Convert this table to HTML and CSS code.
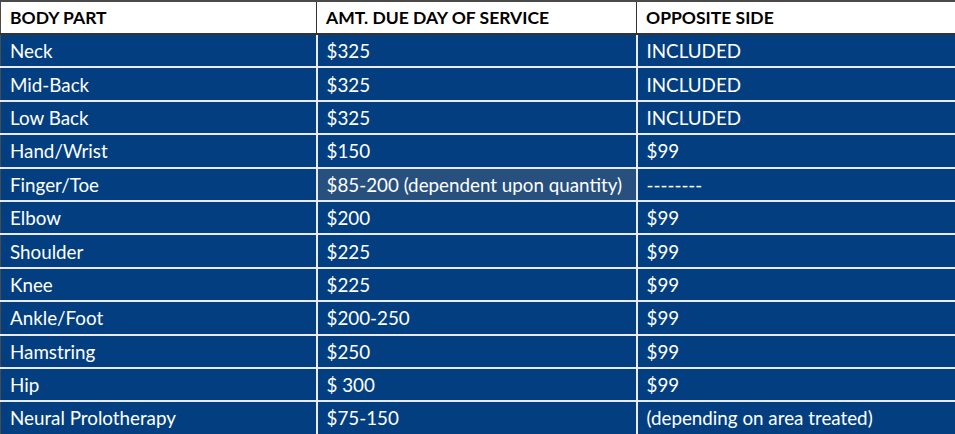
FILE: index.html
```html
<!DOCTYPE html>
<html>
<head>
<meta charset="utf-8">
<link rel="stylesheet" href="styles.css">
</head>
<body>
<table class="price-table">
  <colgroup>
    <col class="c1"><col class="c2"><col class="c3">
  </colgroup>
  <thead>
    <tr><th>BODY PART</th><th>AMT. DUE DAY OF SERVICE</th><th>OPPOSITE SIDE</th></tr>
  </thead>
  <tbody>
    <tr><td>Neck</td><td>$325</td><td>INCLUDED</td></tr>
    <tr><td>Mid-Back</td><td>$325</td><td>INCLUDED</td></tr>
    <tr><td>Low Back</td><td>$325</td><td>INCLUDED</td></tr>
    <tr><td>Hand/Wrist</td><td>$150</td><td>$99</td></tr>
    <tr><td>Finger/Toe</td><td class="hl">$85-200 (dependent upon quantity)</td><td>--------</td></tr>
    <tr><td>Elbow</td><td>$200</td><td>$99</td></tr>
    <tr><td>Shoulder</td><td>$225</td><td>$99</td></tr>
    <tr><td>Knee</td><td>$225</td><td>$99</td></tr>
    <tr><td>Ankle/Foot</td><td>$200-250</td><td>$99</td></tr>
    <tr><td>Hamstring</td><td>$250</td><td>$99</td></tr>
    <tr><td>Hip</td><td>$ 300</td><td>$99</td></tr>
    <tr><td>Neural Prolotherapy</td><td>$75-150</td><td>(depending on area treated)</td></tr>
  </tbody>
</table>
</body>
</html>
```
FILE: styles.css
```css
html, body {
  margin: 0;
  padding: 0;
  background: #ffffff;
  overflow: hidden;
}
.price-table {
  width: 957px;
  border-collapse: collapse;
  table-layout: fixed;
  font-family: Lato, "Liberation Sans", sans-serif;
  font-size: 18.8px;
  border-top: 2px solid #4a4a4a;
  border-left: 1px solid #4a4a4a;
}
.c1 { width: 316px; }
.c2 { width: 320px; }
.c3 { width: 321px; }
.price-table th {
  height: 31px;
  text-align: left;
  font-weight: 700;
  font-size: 17.5px;
  color: #000;
  background: #fff;
  padding: 0 9px;
  border-right: 1px solid #333;
  border-bottom: 2px solid #333;
  white-space: nowrap;
}
.price-table td {
  height: 31.4px;
  padding: 0 9px;
  color: #fff;
  background: #033f80;
  border: 2px solid #e8ecf2;
  border-top: none;
  white-space: nowrap;
}
.price-table td:first-child { border-left: none; }
.price-table td.hl { background: #27507f; }
```
